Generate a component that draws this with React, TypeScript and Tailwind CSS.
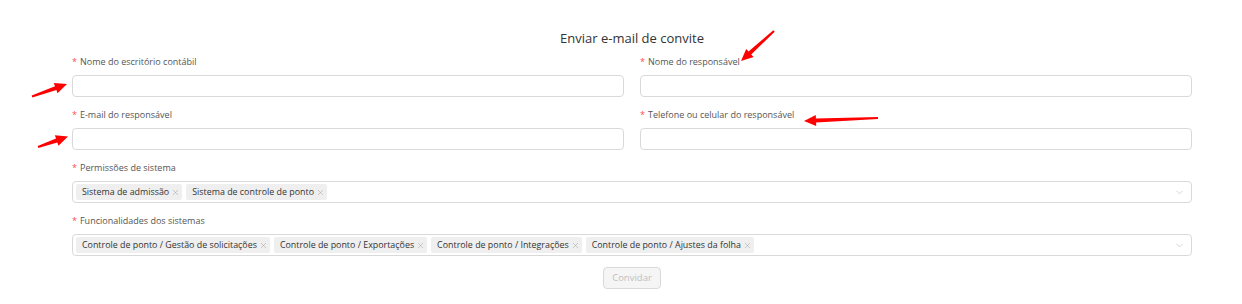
import React from 'react';
import { X, ChevronDown } from 'lucide-react';

const font = { fontFamily: '"Open Sans", "Noto Sans", sans-serif' };

const Label = ({ children }: { children: React.ReactNode }) => (
  <div className="h-[14px] mb-[6px] flex items-center text-[9px] leading-[14px] text-[#555]">
    <span className="text-[#ff4d4f] mr-[3px] text-[9px]">*</span>
    {children}
  </div>
);

const TextField = ({ label }: { label: string }) => (
  <div className="flex-1 mb-[11px]">
    <Label>{label}</Label>
    <div className="h-[22px] rounded-[4px] border border-[#d9d9d9] bg-white" />
  </div>
);

const Tag = ({ text }: { text: string }) => (
  <span className="h-[16px] flex items-center gap-[2px] rounded-[2px] bg-[#efefef] pl-[6px] pr-[2px] text-[8.9px] text-[#333] whitespace-nowrap">
    {text}
    <X size={9} strokeWidth={1.2} className="text-[#999]" />
  </span>
);

const MultiSelect = ({ label, tags }: { label: string; tags: string[] }) => (
  <div className="mb-[11px]">
    <Label>{label}</Label>
    <div className="h-[22px] rounded-[4px] border border-[#d9d9d9] bg-white flex items-center pl-[3px] pr-[6px]">
      <div className="flex-1 flex items-center gap-[4px]">
        {tags.map((t) => (
          <Tag key={t} text={t} />
        ))}
      </div>
      <ChevronDown size={11} strokeWidth={1.4} className="text-[#bfbfbf]" />
    </div>
  </div>
);

// red annotation arrows drawn over the form
const arrows = [
  [32, 96.5, 67, 84],
  [774, 31, 741, 61],
  [38, 147, 68, 136.5],
  [878, 118, 804, 121],
];

const arrowShape = (x1: number, y1: number, x2: number, y2: number) => {
  const dx = x2 - x1;
  const dy = y2 - y1;
  const len = Math.hypot(dx, dy);
  const ux = dx / len;
  const uy = dy / len;
  const nx = -uy;
  const ny = ux;
  const hl = 12;
  const hw = 5.5;
  const bx = x2 - ux * hl;
  const by = y2 - uy * hl;
  const p = (x: number, y: number) => `${x.toFixed(1)},${y.toFixed(1)}`;
  return [
    p(x1 + nx * 1, y1 + ny * 1),
    p(bx + nx * 2, by + ny * 2),
    p(bx + nx * hw, by + ny * hw),
    p(x2, y2),
    p(bx - nx * hw, by - ny * hw),
    p(bx - nx * 2, by - ny * 2),
    p(x1 - nx * 1, y1 - ny * 1),
  ].join(' ');
};

export default function App() {
  return (
    <div className="relative w-[1242px] h-[304px] bg-white overflow-hidden" style={font}>
      <div className="pt-[28px] pl-[72px] pr-[50px]">
        <h2 className="h-[20px] mb-[7px] text-center text-[13px] leading-[20px] text-[#333]">
          Enviar e-mail de convite
        </h2>
        <div className="flex gap-[16px]">
          <TextField label="Nome do escritório contábil" />
          <TextField label="Nome do responsável" />
        </div>
        <div className="flex gap-[16px]">
          <TextField label="E-mail do responsável" />
          <TextField label="Telefone ou celular do responsável" />
        </div>
        <MultiSelect
          label="Permissões de sistema"
          tags={['Sistema de admissão', 'Sistema de controle de ponto']}
        />
        <MultiSelect
          label="Funcionalidades dos sistemas"
          tags={[
            'Controle de ponto / Gestão de solicitações',
            'Controle de ponto / Exportações',
            'Controle de ponto / Integrações',
            'Controle de ponto / Ajustes da folha',
          ]}
        />
        <div className="flex justify-center">
          <button
            disabled
            className="h-[22px] w-[58px] rounded-[4px] border border-[#d9d9d9] bg-[#f5f5f5] text-[9.5px] text-[#bfbfbf]"
          >
            Convidar
          </button>
        </div>
      </div>
      <svg className="absolute inset-0 pointer-events-none" width={1242} height={304}>
        {arrows.map(([x1, y1, x2, y2], i) => (
          <polygon key={i} points={arrowShape(x1, y1, x2, y2)} fill="#ff0000" />
        ))}
      </svg>
    </div>
  );
}
